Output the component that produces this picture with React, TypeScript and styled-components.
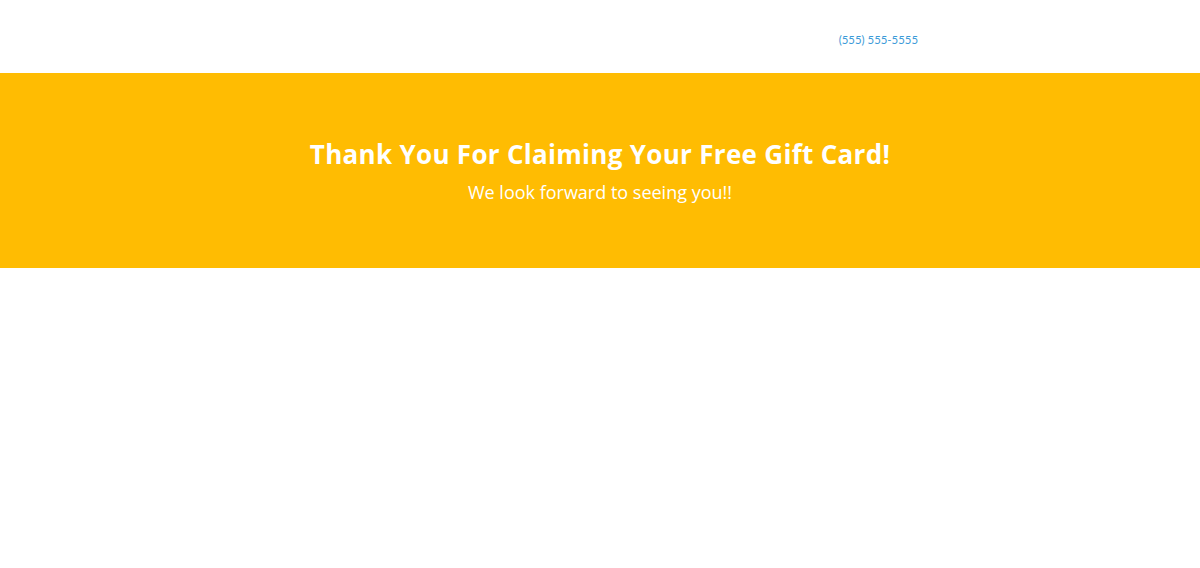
import React from "react";
import styled, { createGlobalStyle } from "styled-components";

const GlobalStyle = createGlobalStyle`
  html, body {
    margin: 0;
    padding: 0;
    background: #ffffff;
  }
`;

const Page = styled.div`
  width: 100%;
  min-height: 568px;
  background: #ffffff;
`;

const Header = styled.header`
  height: 73px;
  display: flex;
  align-items: center;
  justify-content: flex-end;
  padding-right: 282px;
  box-sizing: border-box;
`;

const Phone = styled.a`
  font-family: "Lato", sans-serif;
  font-size: 11.4px;
  color: #3b9ad8;
  text-decoration: none;
  margin-top: 6px;
`;

const Banner = styled.section`
  height: 195px;
  background: #ffbc02;
  display: flex;
  flex-direction: column;
  align-items: center;
  padding-top: 64px;
  box-sizing: border-box;
  color: #ffffff;
  font-family: "Open Sans", "Liberation Sans", sans-serif;
`;

const Title = styled.h1`
  margin: 0;
  font-size: 26px;
  font-weight: 700;
  line-height: 34px;
  letter-spacing: 0.3px;
`;

const Subtitle = styled.p`
  margin: 9px 0 0;
  font-size: 18px;
  font-weight: 400;
  line-height: 24px;
`;

export default function App() {
  return (
    <Page>
      <GlobalStyle />
      <Header>
        <Phone href="#">(555) 555-5555</Phone>
      </Header>
      <Banner>
        <Title>Thank You For Claiming Your Free Gift Card!</Title>
        <Subtitle>We look forward to seeing you!!</Subtitle>
      </Banner>
    </Page>
  );
}
